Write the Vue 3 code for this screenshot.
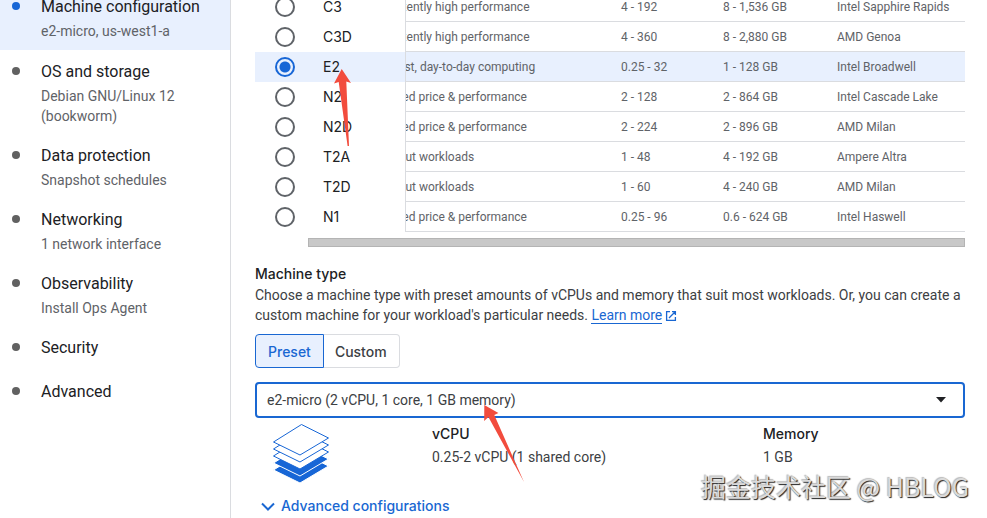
<template>
  <div class="page">
    <nav class="steps">
      <a
        v-for="step in steps"
        :key="step.title"
        href="#"
        class="step"
        :class="{ active: step.title === activeStep }"
        @click.prevent="activeStep = step.title"
      >
        <span class="dot"></span>
        <span class="step-text">
          <span class="step-title">{{ step.title }}</span>
          <span v-if="step.detail" class="step-detail">{{ step.detail }}</span>
        </span>
      </a>
    </nav>

    <main class="content">
      <table class="series-table">
        <tbody>
          <tr v-for="s in series" :key="s.name" :class="{ selected: s.name === selectedSeries }">
            <td class="pick">
              <input :id="'series-' + s.name" v-model="selectedSeries" type="radio" name="series" :value="s.name">
            </td>
            <td class="name"><label :for="'series-' + s.name">{{ s.name }}</label></td>
            <td class="desc">{{ s.desc }}</td>
            <td class="vcpus">{{ s.vcpus }}</td>
            <td class="mem">{{ s.memory }}</td>
            <td class="cpu">{{ s.cpu }}</td>
          </tr>
        </tbody>
      </table>
      <div class="scrollbar"></div>

      <section class="machine-type">
        <label class="heading" for="machine-type">Machine type</label>
        <p class="intro">
          Choose a machine type with preset amounts of vCPUs and memory that suit most workloads. Or, you can create a custom machine for your workload's particular needs.
          <a href="#" class="learn-more">Learn more</a>
          <svg class="external" width="12" height="12" viewBox="0 0 12 12" fill="none" stroke="currentColor"><path d="M5 1.6H1.6v8.8h8.8V7M7 1.6h3.4V5M10.2 1.8L4 8" stroke-width="1.3" /></svg>
        </p>

        <div class="toggle">
          <button type="button" :class="{ on: mode === 'preset' }" @click="mode = 'preset'">Preset</button>
          <button type="button" :class="{ on: mode === 'custom' }" @click="mode = 'custom'">Custom</button>
        </div>

        <div class="select-box">
          <select id="machine-type">
            <option>e2-micro (2 vCPU, 1 core, 1 GB memory)</option>
          </select>
          <svg class="caret" width="12" height="6" viewBox="0 0 12 6"><path d="M1 0h10L6 5.5z" fill="#202124" /></svg>
        </div>

        <div class="summary">
          <svg class="layers" width="58" height="62" viewBox="0 0 58 62">
            <path
              v-for="layer in layers"
              :key="layer.y"
              :transform="`translate(0 ${layer.y})`"
              d="M29.5 1.5L56.5 15L28 32L1.5 19z"
              :fill="layer.filled ? '#1766d6' : '#fff'"
              :stroke="layer.filled ? '#fff' : '#1766d6'"
              stroke-width="1"
              stroke-linejoin="round"
            />
          </svg>
          <div>
            <div class="heading">vCPU</div>
            <div class="value">0.25-2 vCPU (1 shared core)</div>
          </div>
          <div>
            <div class="heading">Memory</div>
            <div class="value">1 GB</div>
          </div>
        </div>

        <button type="button" class="advanced">
          <svg width="14" height="9" viewBox="0 0 14 9" fill="none"><path d="M1 1.5l6 6 6-6" stroke="currentColor" stroke-width="2" /></svg>
          Advanced configurations
        </button>
      </section>
    </main>

    <!-- annotations -->
    <svg class="arrow arrow-series" width="20" height="80" viewBox="0 0 20 80">
      <path d="M9.7 1L19 15L14.3 13.5L17 78L15.6 78L6.7 14L2 15.5z" fill="#f24c3d" />
    </svg>
    <svg class="arrow arrow-type" width="44" height="80" viewBox="0 0 44 80">
      <path d="M2.3 1L16.4 9L12.3 11L42 78L6.4 13L2.2 17z" fill="#f24c3d" />
    </svg>
    <div class="watermark">掘金技术社区 @ HBLOG</div>
  </div>
</template>

<script setup>
import { ref } from 'vue'

const activeStep = ref('Machine configuration')
const selectedSeries = ref('E2')
const mode = ref('preset')

const steps = [
  { title: 'Machine configuration', detail: 'e2-micro, us-west1-a' },
  { title: 'OS and storage', detail: 'Debian GNU/Linux 12 (bookworm)' },
  { title: 'Data protection', detail: 'Snapshot schedules' },
  { title: 'Networking', detail: '1 network interface' },
  { title: 'Observability', detail: 'Install Ops Agent' },
  { title: 'Security' },
  { title: 'Advanced' }
]

const series = [
  { name: 'C3', desc: 'Consistently high performance', vcpus: '4 - 192', memory: '8 - 1,536 GB', cpu: 'Intel Sapphire Rapids' },
  { name: 'C3D', desc: 'Consistently high performance', vcpus: '4 - 360', memory: '8 - 2,880 GB', cpu: 'AMD Genoa' },
  { name: 'E2', desc: 'Low cost, day-to-day computing', vcpus: '0.25 - 32', memory: '1 - 128 GB', cpu: 'Intel Broadwell' },
  { name: 'N2', desc: 'Balanced price & performance', vcpus: '2 - 128', memory: '2 - 864 GB', cpu: 'Intel Cascade Lake' },
  { name: 'N2D', desc: 'Balanced price & performance', vcpus: '2 - 224', memory: '2 - 896 GB', cpu: 'AMD Milan' },
  { name: 'T2A', desc: 'Scale-out workloads', vcpus: '1 - 48', memory: '4 - 192 GB', cpu: 'Ampere Altra' },
  { name: 'T2D', desc: 'Scale-out workloads', vcpus: '1 - 60', memory: '4 - 240 GB', cpu: 'AMD Milan' },
  { name: 'N1', desc: 'Balanced price & performance', vcpus: '0.25 - 96', memory: '0.6 - 624 GB', cpu: 'Intel Haswell' }
]

// bottom layer first, so the upper ones cover it
const layers = [
  { y: 28, filled: true },
  { y: 21, filled: true },
  { y: 14, filled: false },
  { y: 7, filled: false },
  { y: 0, filled: false }
]
</script>

<style>
body { background: #fff; }
</style>

<style scoped>
.page {
  position: relative; display: flex; height: 100vh; overflow: hidden;
  font-family: Roboto, "Liberation Sans", sans-serif; font-size: 14px; line-height: 20px; color: #3c4043;
}

.steps { flex: 0 0 230px; margin-top: -14px; border-right: 1px solid #dadce0; }
.step { display: flex; padding: 8px 24px 8px 12px; color: #5f6368; text-decoration: none; }
.step.active { padding: 7px 24px 9px 12px; background: #e8f0fe; }
.dot { flex: none; width: 8px; height: 8px; margin: 9px 21px 0 0; border-radius: 50%; background: #616161; }
.step.active .dot { background: #1766d6; }
.step-text { display: flex; flex-direction: column; }
.step-title { font-size: 16px; line-height: 28px; color: #202124; }

.content { flex: 1; min-width: 0; margin-top: -8px; padding: 0 22px 0 24px; }

.series-table { width: 100%; table-layout: fixed; border-collapse: separate; border-spacing: 0; font-size: 12px; color: #5f6368; }
.series-table td { box-sizing: border-box; height: 30px; padding: 0; border-bottom: 1px solid #dadce0; line-height: 20px; white-space: nowrap; }
.series-table td.pick { width: 68px; padding-left: 20px; border-bottom: none; }
.series-table td.name { width: 82px; border-bottom: none; font-family: Inter, sans-serif; font-size: 14px; color: #202124; }
/* scrolled sideways under the fixed name column */
.series-table td.desc { width: 216px; border-left: 1px solid #dadce0; overflow: hidden; text-indent: -40px; }
.series-table td.vcpus { width: 102px; }
.series-table td.mem { width: 114px; }
.series-table tr.selected td { background: #e8f0fe; }

.pick input {
  appearance: none; display: block; box-sizing: border-box; width: 20px; height: 20px; margin: 0;
  border: 2px solid #5f6368; border-radius: 50%; background: transparent;
}
.pick input:checked { border-color: #1766d6; background: radial-gradient(circle, #1766d6 5px, transparent 6px); }

.scrollbar { height: 9px; margin: 6px 0 0 53px; background: #c8c8c8; box-shadow: inset 0 0 0 1px #b4b4b4; }

.machine-type { display: flex; flex-direction: column; align-items: stretch; margin-top: 17px; }
.heading { font-family: Inter, sans-serif; font-size: 14px; font-weight: 500; color: #202124; line-height: 20px; }
.intro { margin: 1px 0 0; }
.learn-more { border-bottom: 1px solid #1967d2; color: #1967d2; text-decoration: none; white-space: nowrap; }
.external { margin-left: 3px; color: #1967d2; vertical-align: -2px; }

.toggle { display: flex; margin-top: 9px; }
.toggle button {
  height: 34px; padding: 0 12px; border: 1px solid #dadce0; border-radius: 0 4px 4px 0; background: #fff;
  font-family: Inter, sans-serif; font-size: 14px; font-weight: 500; color: #3c4043;
}
.toggle button:first-child { border-radius: 4px 0 0 4px; }
.toggle button + button { padding-left: 11px; border-left: none; }
.toggle button.on { border: 1px solid #1967d2; background: #e8f0fe; color: #1967d2; }

.select-box { display: grid; align-items: center; margin-top: 14px; }
.select-box select {
  grid-area: 1 / 1; appearance: none; width: 100%; height: 36px; padding: 0 36px 1px 10px;
  border: 2px solid #1967d2; border-radius: 4px; background: #fff; font: inherit; color: #3c4043;
}
.caret { grid-area: 1 / 1; justify-self: end; margin-right: 18px; pointer-events: none; }

.summary { display: grid; grid-template-columns: 177px 331px 1fr; margin-top: 5px; }
.summary > div { padding-top: 1px; }
.layers { margin-left: 17px; }
.value { margin-top: 3px; }

.advanced {
  display: flex; align-items: center; gap: 6px; align-self: flex-start; margin-top: 11px; padding: 0 0 0 6px;
  border: none; background: none; font-family: Inter, sans-serif; font-size: 14px; font-weight: 500; line-height: 20px; color: #1967d2;
}

.arrow { position: absolute; pointer-events: none; }
.arrow-series { left: 332px; top: 68px; }
.arrow-type { left: 482px; top: 404px; }

.watermark {
  position: absolute; right: 18px; bottom: 14px; font-family: "Noto Sans CJK SC", sans-serif; font-size: 25px; line-height: 36px;
  color: #dadada; text-shadow: 1px 1px 1px #222, -1px -1px 1px #bbb;
}
</style>
